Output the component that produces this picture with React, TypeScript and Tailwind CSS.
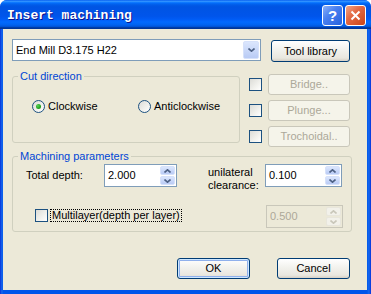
import React from "react";

function Checkbox() {
  return (
    <div className="w-[13px] h-[13px] shrink-0 border border-[#1c5180] bg-[linear-gradient(135deg,#dcdcd7_0%,#f2f2ee_60%,#ffffff_100%)]" />
  );
}

function Radio({ checked }: { checked?: boolean }) {
  return (
    <div className="w-[13px] h-[13px] shrink-0 rounded-full border border-[#1c5180] bg-[linear-gradient(135deg,#dcdcd7_0%,#f2f2ee_60%,#ffffff_100%)] flex items-center justify-center">
      {checked && <div className="w-[5px] h-[5px] rounded-full bg-[radial-gradient(circle_at_35%_35%,#55d455,#21a121_60%,#1a8a1a)]" />}
    </div>
  );
}

function Button({
  children,
  disabled,
  isDefault,
  className = "",
}: {
  children: React.ReactNode;
  disabled?: boolean;
  isDefault?: boolean;
  className?: string;
}) {
  if (disabled) {
    return (
      <div className={`flex items-center justify-center rounded-[3px] border border-[#c9c7ba] bg-[#f5f4ea] text-[#aca899] ${className}`}>
        {children}
      </div>
    );
  }
  return (
    <div
      className={`flex items-center justify-center rounded-[3px] border border-[#003c74] bg-[linear-gradient(180deg,#ffffff_0%,#f3f3ef_40%,#e9e7df_85%,#d6d0c5_100%)] text-black ${
        isDefault ? "shadow-[inset_0_0_0_1px_#cee7ff,inset_0_0_0_2px_#8fb0ec]" : ""
      } ${className}`}
    >
      {children}
    </div>
  );
}

function Chevron({ up, color }: { up?: boolean; color: string }) {
  return (
    <svg width="7" height="4" viewBox="0 0 7 4">
      <path d={up ? "M0.5 3.5 L3.5 0.8 L6.5 3.5" : "M0.5 0.5 L3.5 3.2 L6.5 0.5"} fill="none" stroke={color} strokeWidth="1.6" />
    </svg>
  );
}

function Spin({ value, disabled, className = "" }: { value: string; disabled?: boolean; className?: string }) {
  return (
    <div
      className={`h-[23px] flex items-stretch border p-[1px] ${
        disabled ? "border-[#c9c7ba] bg-[#ece9d8] text-[#aca899]" : "border-[#7f9db9] bg-white text-black"
      } ${className}`}
    >
      <div className="flex-1 flex items-center pl-[2px]">{value}</div>
      <div className="w-[15px] flex flex-col gap-[1px]">
        <div
          className={`flex-1 flex items-center justify-center rounded-[2px] border ${
            disabled ? "border-[#e8e6dc] bg-[#f2f1ea]" : "border-[#d6e1fa] bg-[linear-gradient(180deg,#dbe6fd,#b9cbf5)]"
          }`}
        >
          <Chevron up color={disabled ? "#c9c7ba" : "#4d6185"} />
        </div>
        <div
          className={`flex-1 flex items-center justify-center rounded-[2px] border ${
            disabled ? "border-[#e8e6dc] bg-[#f2f1ea]" : "border-[#d6e1fa] bg-[linear-gradient(180deg,#dbe6fd,#b9cbf5)]"
          }`}
        >
          <Chevron color={disabled ? "#c9c7ba" : "#4d6185"} />
        </div>
      </div>
    </div>
  );
}

export default function App() {
  return (
    <div className="w-[371px] h-[294px] flex flex-col rounded-t-[7px] overflow-hidden bg-[linear-gradient(90deg,#0831d9_0px,#166aee_2px,#0055ea_3px,#0055ea_367px,#166aee_369px,#0831d9_371px)] font-['Liberation_Sans',Arial,sans-serif] text-[11px] leading-[13px] text-black">
      {/* title bar */}
      <div className="h-[29px] shrink-0 flex items-start pl-[7px] pr-[5px] bg-[linear-gradient(180deg,#0058ee_0%,#3593ff_4%,#288eff_6%,#127dff_8%,#036ffc_10%,#0262ee_14%,#0057e5_20%,#0054e3_24%,#0055eb_56%,#005bf5_66%,#026afe_76%,#0062ef_86%,#0052d6_92%,#0040ab_94%,#003092_100%)]">
        <span className="mt-[8px] font-['Liberation_Mono',monospace] font-bold text-[13px] leading-[16px] text-white [text-shadow:1px_1px_#0f1089]">
          Insert machining
        </span>
        <div className="ml-auto mt-[5px] flex gap-[2px]">
          <div className="w-[21px] h-[21px] rounded-[3px] border border-white bg-[linear-gradient(135deg,#8bb1f9_0%,#4a80f0_40%,#2661de_100%)] flex items-center justify-center text-white font-bold text-[15px] leading-none">
            ?
          </div>
          <div className="w-[21px] h-[21px] rounded-[3px] border border-white bg-[linear-gradient(135deg,#f2a586_0%,#e36a45_40%,#cc4416_100%)] flex items-center justify-center">
            <svg width="11" height="11" viewBox="0 0 11 11">
              <path d="M1.5 1.5 L9.5 9.5 M9.5 1.5 L1.5 9.5" stroke="white" strokeWidth="2" />
            </svg>
          </div>
        </div>
      </div>

      {/* client area */}
      <div className="flex-1 ml-[3px] mr-[4px] mb-[4px] bg-[#ece9d8] flex flex-col pl-[9px] pt-[10px]">
        {/* tool row */}
        <div className="flex items-start">
          <div className="w-[249px] h-[22px] border border-[#7f9db9] bg-white flex items-stretch p-[1px]">
            <div className="flex-1 flex items-center pl-[2px]">End Mill D3.175 H22</div>
            <div className="w-[16px] rounded-[2px] border border-[#d6e1fa] bg-[linear-gradient(180deg,#dbe6fd,#b9cbf5)] flex items-center justify-center">
              <Chevron color="#4d6185" />
            </div>
          </div>
          <Button className="ml-[10px] mt-[1px] w-[79px] h-[22px]">Tool library</Button>
        </div>

        {/* cut direction + options */}
        <div className="mt-[8px] flex items-start">
          <div className="relative w-[228px] h-[73px] pt-[6px]">
            <div className="h-full border border-[#d0d0bf] rounded-[3px] pt-[23px] pl-[19px] flex items-start">
              <div className="w-[106px] flex items-center gap-[3px]">
                <Radio checked />
                <span>Clockwise</span>
              </div>
              <div className="flex items-center gap-[3px]">
                <Radio />
                <span>Anticlockwise</span>
              </div>
            </div>
            <span className="absolute top-0 left-[6px] px-[2px] bg-[#ece9d8] text-[#0046d5]">Cut direction</span>
          </div>

          <div className="ml-[9px] mt-[4px] flex flex-col gap-[5px]">
            <div className="flex items-center gap-[6px]">
              <Checkbox />
              <Button disabled className="w-[82px] h-[21px]">Bridge..</Button>
            </div>
            <div className="flex items-center gap-[6px]">
              <Checkbox />
              <Button disabled className="w-[82px] h-[21px]">Plunge...</Button>
            </div>
            <div className="flex items-center gap-[6px]">
              <Checkbox />
              <Button disabled className="w-[82px] h-[21px]">Trochoidal..</Button>
            </div>
          </div>
        </div>

        {/* machining parameters */}
        <div className="relative mt-[3px] w-[340px] h-[82px] pt-[6px]">
          <div className="h-full border border-[#d0d0bf] rounded-[3px] flex flex-col pt-[7px] pl-[13px] pr-[8px]">
            <div className="flex items-start">
              <div className="w-[78px] h-[23px] flex items-center">Total depth:</div>
              <Spin value="2.000" className="w-[73px]" />
              <div className="ml-[31px] w-[57px] pt-[2px] flex flex-col">
                <span>unilateral</span>
                <span>clearance:</span>
              </div>
              <Spin value="0.100" className="w-[77px]" />
            </div>
            <div className="mt-[13px] flex items-start">
              <div className="ml-[9px] mt-[4px]">
                <Checkbox />
              </div>
              <span className="ml-[2px] mt-[4px] h-[13px] px-[1px] flex items-center border border-dotted border-black">
                Multilayer(depth per layer)
              </span>
              <Spin value="0.500" disabled className="ml-auto w-[77px]" />
            </div>
          </div>
          <span className="absolute top-0 left-[6px] px-[2px] bg-[#ece9d8] text-[#0046d5]">Machining parameters</span>
        </div>

        {/* dialog buttons */}
        <div className="mt-[26px] flex justify-end gap-[27px] pr-[17px]">
          <Button isDefault className="w-[73px] h-[21px]">OK</Button>
          <Button className="w-[73px] h-[21px]">Cancel</Button>
        </div>
      </div>
    </div>
  );
}
